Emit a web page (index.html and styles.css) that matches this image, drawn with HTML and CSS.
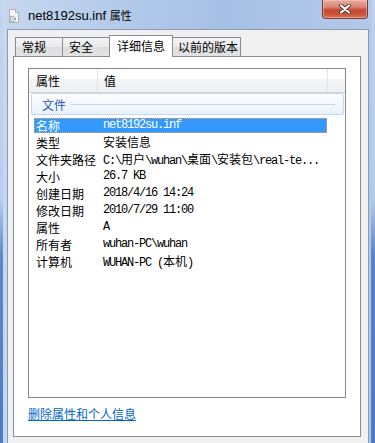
FILE: index.html
```html
<!DOCTYPE html>
<html lang="zh-CN">
<head>
    <meta charset="UTF-8">
    <title>net8192su.inf 属性</title>
    <link rel="stylesheet" href="styles.css">
</head>
<body>
    <div class="window">
        <!-- Заголовок окна -->
        <div class="titlebar">
            <svg class="app-icon" width="16" height="16" viewBox="0 0 16 16">
                <path d="M3.5 1.5h6l3 3v10h-9z" fill="#f7f9fb" stroke="#a7b0ba"/>
                <path d="M9.5 1.5v3h3" fill="#e3e7ec" stroke="#a7b0ba"/>
                <circle cx="6.5" cy="11" r="2.6" fill="none" stroke="#8e979f" stroke-width="1.6" stroke-dasharray="1.4 1"/>
                <circle cx="6.5" cy="11" r="1" fill="#b7bec6"/>
            </svg>
            <span class="title">net8192su.inf <span class="title-cj">属性</span></span>
            <div class="close-btn">
                <svg width="12" height="10" viewBox="0 0 12 10">
                    <path d="M2 1.5l8 7M10 1.5l-8 7" stroke="#5a3330" stroke-width="4" stroke-linecap="round"/>
                    <path d="M2 1.5l8 7M10 1.5l-8 7" stroke="#ffffff" stroke-width="2.2" stroke-linecap="round"/>
                </svg>
            </div>
        </div>

        <div class="client">
            <div class="tabs">
                <div class="tab tab-general">常规</div>
                <div class="tab tab-security">安全</div>
                <div class="tab tab-details active">详细信息</div>
                <div class="tab tab-versions">以前的版本</div>
            </div>

            <div class="page">
                <div class="list">
                    <div class="list-head">
                        <div class="col col-name">属性</div>
                        <div class="col col-value">值</div>
                        <div class="col col-rest"></div>
                    </div>

                    <div class="group">
                        <span class="group-title">文件</span>
                        <span class="group-line"></span>
                    </div>

                    <div class="row selected"><div class="row-inner"><span class="name">名称</span><span class="value">net8192su.inf</span></div></div>
                    <div class="row"><div class="row-inner"><span class="name">类型</span><span class="value"><span class="cj">安装信息</span></span></div></div>
                    <div class="row"><div class="row-inner"><span class="name">文件夹路径</span><span class="value">C:\<span class="cj">用户</span>\wuhan\<span class="cj">桌面</span>\<span class="cj">安装包</span>\real-te...</span></div></div>
                    <div class="row"><div class="row-inner"><span class="name">大小</span><span class="value">26.7 KB</span></div></div>
                    <div class="row"><div class="row-inner"><span class="name">创建日期</span><span class="value">2018/4/16 14:24</span></div></div>
                    <div class="row"><div class="row-inner"><span class="name">修改日期</span><span class="value">2010/7/29 11:00</span></div></div>
                    <div class="row"><div class="row-inner"><span class="name">属性</span><span class="value">A</span></div></div>
                    <div class="row"><div class="row-inner"><span class="name">所有者</span><span class="value">wuhan-PC\wuhan</span></div></div>
                    <div class="row"><div class="row-inner"><span class="name">计算机</span><span class="value">WUHAN-PC (<span class="cj">本机</span>)</span></div></div>
                </div>

                <a class="remove-link" href="#">删除属性和个人信息</a>
            </div>
        </div>
    </div>
</body>
</html>
```

FILE: styles.css
```css
body {
    margin: 0;
    width: 375px;
    height: 443px;
    overflow: hidden;
    font-family: "Noto Sans CJK SC", sans-serif;
    font-size: 12px;
    color: #000;
    background:
        linear-gradient(to bottom, #c3d6ee 0, #b7cdec 45%, #5d87cc 58%, #4d7bc8 100%) left top / 3px 100% no-repeat,
        linear-gradient(to bottom, #bcd1ec 0, #b3cbea 45%, #5582cb 58%, #4a79c7 100%) right top / 4px 100% no-repeat,
        linear-gradient(to right, #c6d8ef 0, #b4cbea 30%, #a6c0e5 60%, #b2c9e9 100%);
}
.window {
    height: 443px;
    display: flex;
    flex-direction: column;
}
.titlebar {
    height: 29px;
    display: flex;
    align-items: center;
    flex-shrink: 0;
}
.app-icon {
    margin-left: 6px;
    margin-top: 2px;
}
.title {
    margin-left: 6px;
    font-family: "Liberation Sans", "Noto Sans CJK SC", sans-serif;
    font-size: 13px;
    color: #000;
    margin-top: 1px;
}
.title-cj {
    font-family: "Noto Sans CJK SC", sans-serif;
    font-size: 11px;
}
.close-btn {
    margin-left: auto;
    margin-right: 7px;
    align-self: flex-start;
    width: 44px;
    height: 18px;
    border: 1px solid #7a3b33;
    border-top: none;
    border-radius: 0 0 4px 4px;
    background: linear-gradient(to bottom, #eaaa9c 0, #d98574 40%, #c24a32 55%, #c9553a 80%, #dc7556 100%);
    box-shadow: inset 0 0 0 1px rgba(255, 220, 210, 0.45);
    display: flex;
    align-items: center;
    justify-content: center;
}
.client {
    flex: 1;
    margin: 0 6px 0 7px;
    border: 1px solid #8a9bb5;
    border-bottom: none;
    background: #f0f0f0;
}
.tabs {
    display: flex;
    align-items: flex-end;
    height: 21px;
    margin-top: 5px;
    padding-left: 8px;
}
.tab {
    height: 19px;
    box-sizing: border-box;
    border: 1px solid #898c95;
    border-bottom: none;
    margin-left: -1px;
    padding-left: 6px;
    line-height: 17px;
    background: linear-gradient(to bottom, #f3f3f3 0, #ebebeb 50%, #dddddd 51%, #e3e3e3 100%);
    white-space: nowrap;
}
.tab-general { width: 48px; }
.tab-security { width: 48px; }
.tab-details { width: 64px; }
.tab-versions { width: 69px; padding-left: 5px; }
.tab.active {
    position: relative;
    z-index: 2;
    height: 22px;
    margin-bottom: -1px;
    padding-left: 7px;
    line-height: 19px;
    background: #fff;
}
.page {
    position: relative;
    z-index: 1;
    width: 348px;
    height: 381px;
    box-sizing: border-box;
    margin-left: 5px;
    border: 1px solid #898c95;
    background: #fff;
    padding-top: 11px;
    padding-left: 14px;
}
.list {
    width: 318px;
    height: 330px;
    box-sizing: border-box;
    border: 1px solid #828790;
}
.list-head {
    display: flex;
    height: 24px;
    box-sizing: border-box;
    border-bottom: 1px solid #d5d5d5;
    background: linear-gradient(to bottom, #ffffff 0, #ffffff 42%, #f3f4f5 43%, #eff0f2 100%);
}
.col {
    line-height: 23px;
    box-sizing: border-box;
}
.col-name {
    width: 69px;
    padding-left: 7px;
    border-right: 1px solid #e2e3e5;
}
.col-value {
    width: 230px;
    padding-left: 6px;
    border-right: 1px solid #e2e3e5;
}
.col-rest {
    flex: 1;
}
.group {
    display: flex;
    align-items: center;
    height: 22px;
    box-sizing: border-box;
    margin: 0 1px 2px 2px;
    border: 1px solid #c4d8f2;
    border-radius: 2px;
    background: linear-gradient(to bottom, #fbfdff 0, #f2f7fd 60%, #e9f1fb 100%);
    padding-left: 10px;
}
.group-title {
    color: #2356c7;
}
.group-line {
    flex: 1;
    height: 1px;
    margin: 0 8px 0 5px;
    background: #c3d4ec;
}
.row {
    height: 17px;
    box-sizing: border-box;
    padding: 1px 0;
    margin-left: 5px;
    width: 293px;
}
.row-inner {
    height: 15px;
    box-sizing: border-box;
    border: 1px dotted transparent;
    padding-left: 1px;
    display: flex;
    align-items: center;
    white-space: nowrap;
}
.row.selected .row-inner {
    background: #3399ff;
    border-color: #e8a050;
    color: #fff;
}
.name {
    width: 67px;
    flex-shrink: 0;
    line-height: 15px;
}
.value {
    font-family: "Liberation Mono", "Noto Sans CJK SC", monospace;
    font-size: 12px;
    letter-spacing: -1.2px;
    line-height: 15px;
}
.cj {
    font-family: "Noto Sans CJK SC", sans-serif;
    font-size: 12px;
    letter-spacing: 0;
}
.remove-link {
    display: inline-block;
    margin-top: 8px;
    line-height: 16px;
    color: #0066cc;
    text-decoration: underline;
}
```
